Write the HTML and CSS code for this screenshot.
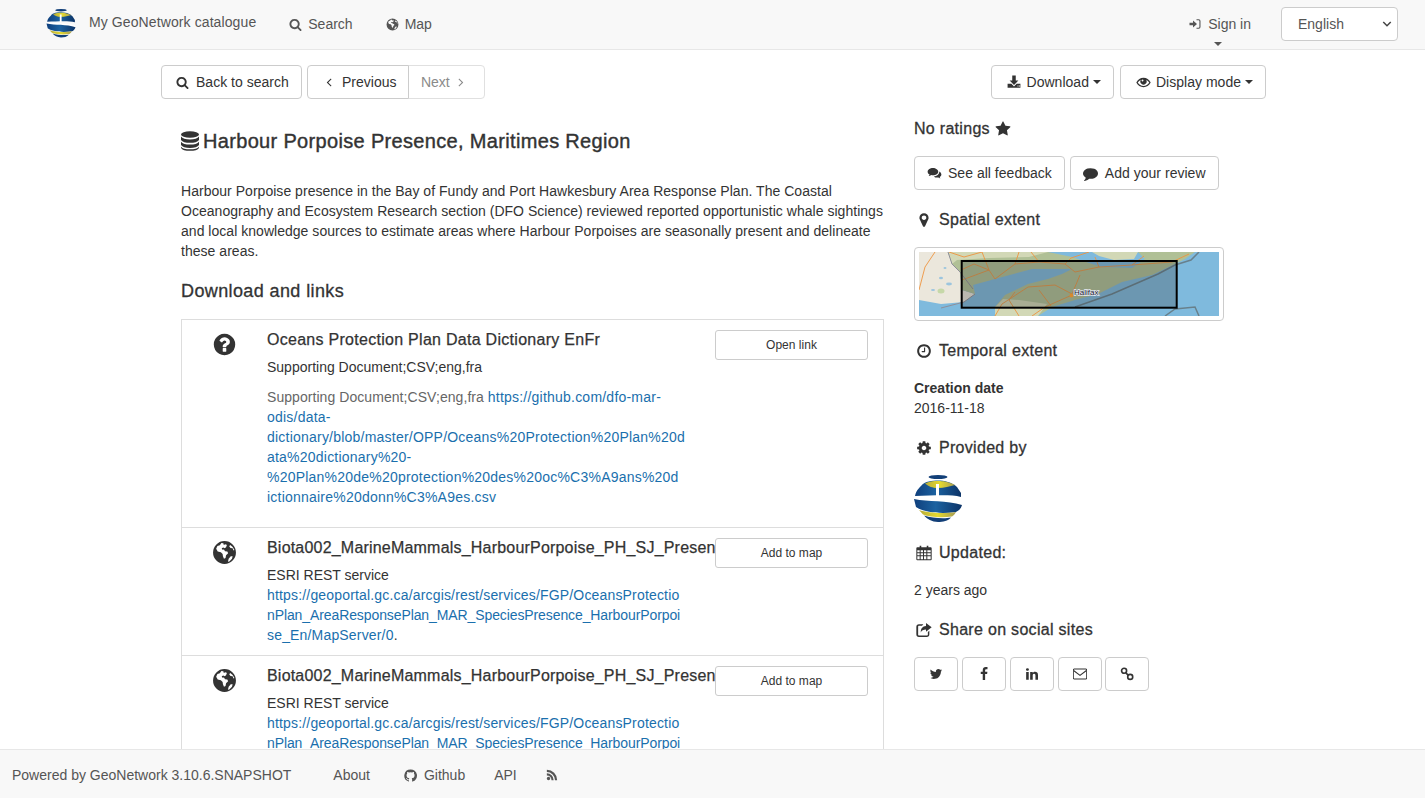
FILE: index.html
```html
<!DOCTYPE html>
<html lang="en">
<head>
<meta charset="utf-8">
<title>Harbour Porpoise Presence, Maritimes Region</title>
<link rel="stylesheet" href="styles.css">
</head>
<body>
<svg class="sprite" aria-hidden="true">
  <defs>
    <linearGradient id="gbl" x1="0" x2="1" y1="0" y2="0"><stop offset="0" stop-color="#0f3f7c"/><stop offset=".45" stop-color="#1c62a0"/><stop offset="1" stop-color="#0c3468"/></linearGradient>
    <linearGradient id="gye" x1="0" x2="1" y1="0" y2="0"><stop offset="0" stop-color="#b6ab3a"/><stop offset=".5" stop-color="#e4d92f"/><stop offset="1" stop-color="#a69c52"/></linearGradient>
  </defs>
  <symbol id="logo" viewBox="0 0 48 48">
    <ellipse cx="24" cy="2" rx="9.500" ry="2" fill="#123f78"/>
    <path d="M7 11C11 6 18 5.500 24 5.500S38 7 43 12L47 18 47 22C35 19 17 21 1 21 2 16 4 14 7 11Z" fill="url(#gbl)"/>
    <path d="M11 8.500C15 6.500 19 6 24 6S34 6.500 41 10C36 11.500 30 13 24 13S15 11.500 11 8.500Z" fill="url(#gye)"/>
    <path d="M22 9h3v13h-3z" fill="#fff"/>
    <path d="M0 22C15 24 33 23 47 27L47 29C33 26 14 27 0 24Z" fill="#fff"/>
    <path d="M0 24C14 27 33 25 48 30 47 34 44 36 42 37 28 39 11 38 2 32Z" fill="url(#gbl)"/>
    <path d="M5 35C14 38 30 39 42 37 41 39 40 40 38 41.500 28 43 15 42 9 39.500Z" fill="url(#gye)"/>
    <path d="M10 40.500C18 43 30 44 37 42.500 34 46 29 47 24 47 18 47 13 44 10 40.500Z" fill="#123f78"/>
  </symbol>
  <symbol id="i-search" viewBox="0 0 1792 1792"><path d="M1216 832q0-185-131.500-316.500t-316.500-131.500-316.500 131.500-131.500 316.500 131.500 316.500 316.500 131.500 316.500-131.500 131.500-316.500zm512 832q0 52-38 90t-90 38q-54 0-90-38l-343-342q-179 124-399 124-143 0-273.500-55.500t-225-150-150-225-55.500-273.500 55.500-273.500 150-225 225-150 273.500-55.500 273.500 55.500 225 150 150 225 55.500 273.500q0 220-124 399l343 343q37 37 37 90z"/></symbol>
  <symbol id="i-globe" viewBox="0 0 24 24"><path fill-rule="evenodd" d="M12 1a11 11 0 1 0 0 22 11 11 0 0 0 0-22ZM9 2.800 7.500 5 5.200 5.700 4 8.300 5.500 11l3 .7 1.700 1.800.3 2.200 1 2.300 1.500-.8.500-2.500 2-2-.8-1.700-2.200-.3-1-1.500-1.500.2-.7-1.400 1.500-.7 1.400.5 1.300-.9.800-2-1.500-1L13 4.200l-1.800.3-.3-1.500ZM17.500 4.800l-1 1.300 1.300 1.500 2 .3.800 2.100.9-.5A9.600 9.600 0 0 0 17.500 4.800ZM18 15.500l-2 2.500-.7 2.900 1.300-.3 2.600-2.600.6-2.500Z"/></symbol>
  <symbol id="i-question" viewBox="0 0 1792 1792"><path d="M1024 1376v-192q0-14-9-23t-23-9h-192q-14 0-23 9t-9 23v192q0 14 9 23t23 9h192q14 0 23-9t9-23zm256-672q0-88-55.500-163t-138.500-116-170-41q-243 0-371 213-15 24 8 42l132 100q7 6 19 6 16 0 25-12 53-68 86-92 34-24 86-24 48 0 85.500 26t37.500 59q0 38-20 61t-68 45q-63 28-115.500 86.500t-52.500 125.500v36q0 14 9 23t23 9h192q14 0 23-9t9-23q0-19 21.500-49.500t54.500-49.500q32-18 49-28.500t46-35 44.500-48 28-60.500 12.500-81zm384 192q0 209-103 385.500t-279.500 279.500-385.500 103-385.500-103-279.500-279.500-103-385.500 103-385.500 279.500-279.500 385.500-103 385.500 103 279.500 279.500 103 385.500z"/></symbol>
  <symbol id="i-star" viewBox="0 0 1792 1792"><path d="M1728 647q0 22-26 48l-363 354 86 500q1 7 1 20 0 21-10.500 35.500t-30.500 14.500q-19 0-40-12l-449-236-449 236q-22 12-40 12-21 0-31.500-14.500t-10.500-35.500q0-6 2-20l86-500-364-354q-25-27-25-48 0-37 56-46l502-73 225-455q19-41 49-41t49 41l225 455 502 73q56 9 56 46z"/></symbol>
  <symbol id="i-marker" viewBox="0 0 1792 1792"><path d="M1152 640q0-106-75-181t-181-75-181 75-75 181 75 181 181 75 181-75 75-181zm256 0q0 109-33 179l-364 774q-16 33-47.500 52t-67.500 19-67.500-19-46.500-52l-365-774q-33-70-33-179 0-212 150-362t362-150 362 150 150 362z"/></symbol>
  <symbol id="i-left" viewBox="0 0 1792 1792"><path d="M1203 544q0 13-10 23l-393 393 393 393q10 10 10 23t-10 23l-50 50q-10 10-23 10t-23-10l-466-466q-10-10-10-23t10-23l466-466q10-10 23-10t23 10l50 50q10 10 10 23z"/></symbol>
  <symbol id="i-right" viewBox="0 0 1792 1792"><path d="M1171 960q0 13-10 23l-466 466q-10 10-23 10t-23-10l-50-50q-10-10-10-23t10-23l393-393-393-393q-10-10-10-23t10-23l50-50q10-10 23-10t23 10l466 466q10 10 10 23z"/></symbol>
  <symbol id="i-clock" viewBox="0 0 1792 1792"><path d="M1024 544v448q0 14-9 23t-23 9h-320q-14 0-23-9t-9-23v-64q0-14 9-23t23-9h224v-352q0-14 9-23t23-9h64q14 0 23 9t9 23zm416 352q0-148-73-273t-198-198-273-73-273 73-198 198-73 273 73 273 198 198 273 73 273-73 198-198 73-273zm224 0q0 209-103 385.500t-279.500 279.500-385.500 103-385.500-103-279.500-279.500-103-385.500 103-385.500 279.500-279.500 385.500-103 385.500 103 279.500 279.500 103 385.500z"/></symbol>
  <symbol id="i-cog" viewBox="0 0 1792 1792"><path d="M1152 896q0-106-75-181t-181-75-181 75-75 181 75 181 181 75 181-75 75-181zm512-109v222q0 12-8 23t-20 13l-185 28q-19 54-39 91 35 50 107 138 10 12 10 25t-9 23q-27 37-99 108t-94 71q-12 0-26-9l-138-108q-44 23-91 38-16 136-29 186-7 28-36 28h-222q-14 0-24.500-8.500t-11.500-21.500l-28-184q-49-16-90-37l-141 107q-10 9-25 9-14 0-25-11-126-114-165-168-7-10-7-23 0-12 8-23 15-21 51-66.500t54-70.500q-27-50-41-99l-183-27q-13-2-21-12.500t-8-23.500v-222q0-12 8-23t19-13l186-28q14-46 39-92-40-57-107-138-10-12-10-24 0-10 9-23 26-36 98.500-107.500t94.500-71.500q13 0 26 10l138 107q44-23 91-38 16-136 29-186 7-28 36-28h222q14 0 24.500 8.500t11.500 21.500l28 184q49 16 90 37l142-107q9-9 24-9 13 0 25 10 129 119 165 170 7 8 7 22 0 12-8 23-15 21-51 66.500t-54 70.500q26 50 41 98l183 28q13 2 21 12.500t8 23.500z"/></symbol>
  <symbol id="i-twitter" viewBox="0 0 1792 1792"><path d="M1684 408q-67 98-162 167 1 14 1 42 0 130-38 259.500t-115.500 248.500-184.500 210.500-258 146-323 54.500q-271 0-496-145 35 4 78 4 225 0 401-138-105-2-188-64.500t-114-159.500q33 5 61 5 43 0 85-11-112-23-185.500-111.500t-73.500-205.500v-4q68 38 146 41-66-44-105-115t-39-154q0-88 44-163 121 149 294.500 238.500t371.500 99.500q-8-38-8-74 0-134 94.500-228.500t228.500-94.500q140 0 236 102 109-21 205-78-37 115-142 178 92-10 184-50z"/></symbol>
  <symbol id="i-facebook" viewBox="0 0 1792 1792"><path d="M1343 12v264h-157q-86 0-116 36t-30 108v189h293l-39 296h-254v759h-306v-759h-255v-296h255v-218q0-186 104-288.500t277-102.500q147 0 228 12z"/></symbol>
  <symbol id="i-linkedin" viewBox="0 0 1792 1792"><path d="M477 625v991h-330v-991h330zm21-306q1 73-50.500 122t-135.500 49h-2q-82 0-132-49t-50-122q0-74 51.500-122.500t134.500-48.500 133 48.500 51 122.500zm1166 729v568h-329v-530q0-105-40.500-164.500t-126.500-59.500q-63 0-105.500 34.500t-63.500 85.500q-11 30-11 81v553h-329q2-399 2-647t-1-296l-1-48h329v144h-2q20-32 41-56t56.500-52 87-43.500 114.500-15.500q171 0 275 113.500t104 332.500z"/></symbol>
  <symbol id="i-comment" viewBox="0 0 1792 1792"><path d="M1792 896q0 174-120 321.500t-326 233-450 85.500q-70 0-145-8-198 175-460 242-49 14-114 22-17 2-30.500-9t-17.500-29v-1q-3-4-.5-12t2-10 4.500-9.500l6-9 7-8.500 8-9q7-8 31-34.500t34.500-38 31-39.500 32.500-51 27-59 26-76q-157-89-247.500-220t-90.500-281q0-130 71-248.500t191-204.500 286-136.500 348-50.500q244 0 450 85.500t326 233 120 321.500z"/></symbol>
  <symbol id="i-comments" viewBox="0 0 24 24"><path d="M9.500 3C4.800 3 1 5.700 1 9c0 1.900 1.200 3.500 3.100 4.600-.3 1-.8 1.800-1.500 2.500 1.600-.2 3-.8 4.100-1.800.9.200 1.800.3 2.800.3 4.700 0 8.500-2.400 8.500-5.600S14.200 3 9.500 3Z"/><path d="M19.500 8.800c.1.300.1.600.1.900 0 3.700-3.800 6.600-8.600 6.900 1.200 1.200 3.100 1.900 5.200 1.900.7 0 1.400-.1 2-.2.900.8 2 1.300 3.300 1.500-.6-.7-1-1.400-1.200-2.200 1.700-.9 2.700-2.300 2.700-3.900 0-1.900-1.400-3.600-3.500-4.800Z"/></symbol>
  <symbol id="i-signin" viewBox="0 0 24 24"><path d="M1 9.500h7V5l8 7-8 7v-4.500H1z"/><path d="M15 2.500h4.500A3.500 3.500 0 0 1 23 6v12a3.500 3.500 0 0 1-3.500 3.500H15v-2.200h4.300c.9 0 1.500-.6 1.500-1.500V6.200c0-.9-.6-1.500-1.500-1.500H15z"/></symbol>
  <symbol id="i-download" viewBox="0 0 24 24"><path d="M9 1h6v8.500h4.500L12 17 4.500 9.500H9z"/><path d="M1 15h6.500L12 19.500 16.500 15H23v7H1zM18 18v1.600h1.700V18zm2.700 0v1.600h1.700V18z"/></symbol>
  <symbol id="i-eye" viewBox="0 0 24 24"><path fill-rule="evenodd" d="M12 4.500C7 4.500 3 7.500.5 12c2.500 4.500 6.500 7.500 11.500 7.500s9-3 11.500-7.500C21 7.500 17 4.500 12 4.500ZM2.800 12c1.300-2 3-3.600 5-4.500a5 5 0 1 0 8.400 0c2 1 3.700 2.500 5 4.500-2.200 3.400-5.400 5.500-9.200 5.500S5 15.400 2.800 12ZM9.200 7.800a1.500 1.500 0 1 1 2.100 2.100A1.500 1.500 0 0 1 9.200 7.800Z"/></symbol>
  <symbol id="i-database" viewBox="1.500 .500 21 23.200" preserveAspectRatio="none"><ellipse cx="12" cy="4.500" rx="10.500" ry="3.800"/><path d="M1.500 7c1.500 2.300 5.500 3.300 10.500 3.300S21 9.300 22.500 7v3.800c-1.500 2.200-5.500 3.400-10.500 3.400S3 13 1.500 10.800ZM1.500 13c1.500 2.300 5.500 3.300 10.500 3.300s9-1 10.500-3.300v3.800c-1.500 2.200-5.500 3.400-10.500 3.400S3 19 1.500 16.800Z"/><path d="M1.500 18.800c1.500 2 5.500 3 10.500 3s9-1 10.500-3v1c-1 2.500-5.500 3.700-10.500 3.700S2.500 22.300 1.500 19.800Z"/></symbol>
  <symbol id="i-calendar" viewBox="0 0 24 24"><path fill-rule="evenodd" d="M5.500 1h2.400v2.500h8.200V1h2.400v2.500H22a1.500 1.500 0 0 1 1.500 1.500v16.500A1.500 1.500 0 0 1 22 23H2a1.500 1.500 0 0 1-1.500-1.500V5A1.500 1.500 0 0 1 2 3.500h3.500Zm-3.500 7v3h3.500V8Zm5 0v3h3.500V8Zm5 0v3h3.500V8Zm5 0v3H22V8ZM2 12.500v3h3.500v-3Zm5 0v3h3.500v-3Zm5 0v3h3.500v-3Zm5 0v3H22v-3ZM2 17v4.500h3.500V17Zm5 0v4.500h3.500V17Zm5 0v4.500h3.500V17Zm5 0v4.500H22V17Z"/></symbol>
  <symbol id="i-share" viewBox="0 0 24 24"><path d="M15 1.500 23.500 8 15 14.800v-3.600c-4 0-6.500 1-7.800 4.600-.4-5.800 2.500-9.300 7.800-9.800Z"/><path d="M4.500 3.500H11l-2 2.200H4.800c-1 0-1.600.6-1.600 1.600v11.400c0 1 .6 1.600 1.600 1.600h11.400c1 0 1.600-.6 1.600-1.600V15l2.200-1.800v5.300a4 4 0 0 1-4 4H4.500a4 4 0 0 1-4-4v-11a4 4 0 0 1 4-4Z"/></symbol>
  <symbol id="i-envelope" viewBox="0 0 24 24"><rect x=".5" y="3.500" width="23" height="17" rx="1.500" fill="none" stroke="currentColor" stroke-width="1.800"/><path d="M1 6l11 8.500L23 6" fill="none" stroke="currentColor" stroke-width="1.800"/></symbol>
  <symbol id="i-link" viewBox="0 0 24 24"><g fill="none" stroke="currentColor" stroke-width="2.800"><circle cx="7" cy="6.500" r="4.300"/><circle cx="17.500" cy="17" r="4.300"/><path d="M10 10l4 4"/></g></symbol>
  <symbol id="i-github" viewBox="0 0 24 24"><path d="M12 .8A11.500 11.500 0 0 0 8.400 23.200c.6.100.8-.2.800-.6v-2c-3.200.7-3.900-1.500-3.900-1.500-.5-1.300-1.300-1.700-1.300-1.700-1-.7.100-.7.100-.7 1.200.1 1.800 1.200 1.800 1.200 1 1.800 2.700 1.300 3.300 1 .1-.8.400-1.300.8-1.600-2.600-.3-5.300-1.300-5.300-5.700 0-1.300.5-2.300 1.200-3.100-.1-.3-.5-1.500.1-3.100 0 0 1-.3 3.200 1.200a11 11 0 0 1 5.800 0c2.200-1.500 3.200-1.200 3.200-1.200.6 1.600.2 2.800.1 3.100.7.800 1.200 1.800 1.200 3.100 0 4.400-2.700 5.400-5.300 5.700.4.400.8 1.100.8 2.200v3.200c0 .3.200.7.800.6A11.500 11.500 0 0 0 12 .8Z"/></symbol>
  <symbol id="i-rss" viewBox="0 0 24 24"><circle cx="5" cy="19" r="3.300"/><path d="M1.700 8.700v4.200A9.400 9.400 0 0 1 11 22.300h4.300A13.600 13.600 0 0 0 1.700 8.700Z"/><path d="M1.700 1.700V6A16.300 16.300 0 0 1 18 22.300h4.300A20.600 20.600 0 0 0 1.700 1.700Z"/></symbol>
</svg>

<div class="app">
  <header class="navbar">
    <a class="brand"><svg class="brand-logo"><use href="#logo"/></svg><span class="brand-text">My GeoNetwork catalogue</span></a>
    <a class="nav-link nav-search"><svg class="ic"><use href="#i-search"/></svg>Search</a>
    <a class="nav-link nav-map"><svg class="ic"><use href="#i-globe"/></svg>Map</a>
    <div class="nav-right">
      <a class="signin"><span class="signin-row"><svg class="ic"><use href="#i-signin"/></svg>Sign in</span><span class="caret signin-caret"></span></a>
      <div class="lang-wrap">
        <select class="lang"><option>English</option></select>
        <svg class="lang-chev" viewBox="0 0 12 8"><path d="M1.500 1.500 6 6l4.500-4.500" fill="none" stroke="currentColor" stroke-width="1.800"/></svg>
      </div>
    </div>
  </header>

  <main class="page">
    <div class="container">
      <div class="toolbar">
        <a class="btn"><svg class="ic"><use href="#i-search"/></svg>Back to search</a>
        <div class="btn-group">
          <a class="btn btn-prev"><svg class="ic ic-angle"><use href="#i-left"/></svg>Previous</a>
          <a class="btn btn-next">Next<svg class="ic ic-angle"><use href="#i-right"/></svg></a>
        </div>
        <div class="toolbar-right">
          <a class="btn"><svg class="ic ic-down"><use href="#i-download"/></svg>Download<span class="caret"></span></a>
          <a class="btn"><svg class="ic ic-eye"><use href="#i-eye"/></svg>Display mode<span class="caret"></span></a>
        </div>
      </div>

      <div class="columns">
        <section class="content">
          <h1 class="title"><svg class="title-ic"><use href="#i-database"/></svg>Harbour Porpoise Presence, Maritimes Region</h1>
          <p class="abstract">Harbour Porpoise presence in the Bay of Fundy and Port Hawkesbury Area Response Plan. The Coastal Oceanography and Ecosystem Research section (DFO Science) reviewed reported opportunistic whale sightings and local knowledge sources to estimate areas where Harbour Porpoises are seasonally present and delineate these areas.</p>
          <h2 class="links-title">Download and links</h2>
          <div class="links">
            <article class="link-row link-row-first">
              <div class="link-ic"><svg><use href="#i-question"/></svg></div>
              <div class="link-body">
                <h3 class="link-title link-title-doc">Oceans Protection Plan Data Dictionary EnFr</h3>
                <p class="link-sub">Supporting Document;CSV;eng,fra</p>
                <p class="link-desc"><span class="muted">Supporting Document;CSV;eng,fra</span> <a class="url url-doc">https://github.com/dfo-mar-<br>odis/data-<br>dictionary/blob/master/OPP/Oceans%20Protection%20Plan%20d<br>ata%20dictionary%20-<br>%20Plan%20de%20protection%20des%20oc%C3%A9ans%20d<br>ictionnaire%20donn%C3%A9es.csv</a></p>
              </div>
              <a class="btn btn-sm">Open link</a>
            </article>
            <article class="link-row">
              <div class="link-ic"><svg><use href="#i-globe"/></svg></div>
              <div class="link-body">
                <h3 class="link-title">Biota002_MarineMammals_HarbourPorpoise_PH_SJ_Presence_En</h3>
                <p class="link-sub">ESRI REST service</p>
                <p class="link-text"><a class="url">https://geoportal.gc.ca/arcgis/rest/services/FGP/OceansProtectio<br><span class="tight">nPlan_AreaResponsePlan_MAR_SpeciesPresence_HarbourPorpoi</span><br>se_En/MapServer/0</a>.</p>
              </div>
              <a class="btn btn-sm">Add to map</a>
            </article>
            <article class="link-row">
              <div class="link-ic"><svg><use href="#i-globe"/></svg></div>
              <div class="link-body">
                <h3 class="link-title">Biota002_MarineMammals_HarbourPorpoise_PH_SJ_Presence_Fr</h3>
                <p class="link-sub">ESRI REST service</p>
                <p class="link-text"><a class="url">https://geoportal.gc.ca/arcgis/rest/services/FGP/OceansProtectio<br><span class="tight">nPlan_AreaResponsePlan_MAR_SpeciesPresence_HarbourPorpoi</span><br>se_Fr/MapServer/0</a>.</p>
              </div>
              <a class="btn btn-sm">Add to map</a>
            </article>
          </div>
        </section>

        <aside class="side">
          <h4 class="side-h side-ratings">No ratings <svg class="side-star"><use href="#i-star"/></svg></h4>
          <div class="side-btns">
            <a class="btn"><svg class="ic ic-fb"><use href="#i-comments"/></svg>See all feedback</a>
            <a class="btn"><svg class="ic ic-rv"><use href="#i-comment"/></svg>Add your review</a>
          </div>
          <h4 class="side-h side-block"><span class="side-ic"><svg><use href="#i-marker"/></svg></span>Spatial extent</h4>
          <div class="thumb">
            <svg class="map" viewBox="0 0 300 64">
              <rect width="300" height="64" fill="#7fbadd"/>
              <path class="land-w" d="M0 0H29L33 12 41 20 43 38 56 42 45 50 22 52 0 48Z"/>
              <path class="land" d="M29 0H129L153 5 173 12 183 15 213 16 219 12 226 7 219 0H276L266 7 256 12 233 23 203 30 179 42 156 48 133 55 119 64H76V55L86 43 109 32 129 27 143 22 153 17H129L113 17 76 27 54 33 56 42 43 38 41 20 33 12Z"/>
              <path class="land-e" d="M173 0H219L215 7 195 8 180 4Z"/>
              <path class="land-e" d="M76 55 84 47 100 48 128 52 119 64H76Z"/>
              <path class="land-e" d="M29 0H129L110 5 70 6 38 8 33 12Z"/>
              <ellipse class="lake" cx="22" cy="26" rx="2" ry="1.200"/>
              <ellipse class="lake" cx="30" cy="32" rx="3" ry="1.400"/>
              <ellipse class="lake" cx="14" cy="38" rx="2" ry="1"/>
              <ellipse class="lake" cx="26" cy="16" rx="1.500" ry="1"/>
              <ellipse class="green-spot" cx="22" cy="39" rx="3.500" ry="2.500"/>
              <path class="road" d="M0 38 6 15 16 0M43 28 70 18 76 27 96 12 120 10 146 12 156 20 180 15 213 13 253 10M63 0 70 18M100 0 96 12M146 12 152 6 170 0M161 23 153 42 136 33 109 35 83 52 76 64M153 43 126 55 113 64M96 40 90 48 100 64M120 38 132 54M30 0 45 5 63 0M70 18 55 12 42 18M120 10 112 0M213 13 225 4M180 15 176 5M253 10 270 2"/>
              <path class="border" d="M29 0 33 12 41 20 54 37M22 56 45 50 56 42"/>
              <path class="coast" d="M156 55 193 42 239 22 256 13M256 13 272 8 280 0M246 64 256 57 276 55 280 64"/>
              <rect class="bbox" x="42.700" y="9" width="215" height="46.700"/>
              <circle cx="152.500" cy="43.500" r="2" fill="#d68a2e"/>
              <text class="map-label" x="155" y="43">Halifax</text>
            </svg>
          </div>
          <h4 class="side-h side-block"><span class="side-ic"><svg><use href="#i-clock"/></svg></span>Temporal extent</h4>
          <dl class="dates">
            <dt>Creation date</dt>
            <dd>2016-11-18</dd>
          </dl>
          <h4 class="side-h side-block"><span class="side-ic"><svg><use href="#i-cog"/></svg></span>Provided by</h4>
          <svg class="org-logo"><use href="#logo"/></svg>
          <h4 class="side-h side-block"><span class="side-ic"><svg><use href="#i-calendar"/></svg></span>Updated:</h4>
          <p class="ago">2 years ago</p>
          <h4 class="side-h side-block"><span class="side-ic"><svg><use href="#i-share"/></svg></span>Share on social sites</h4>
          <div class="social">
            <a class="btn btn-soc"><svg><use href="#i-twitter"/></svg></a>
            <a class="btn btn-soc"><svg><use href="#i-facebook"/></svg></a>
            <a class="btn btn-soc"><svg><use href="#i-linkedin"/></svg></a>
            <a class="btn btn-soc"><svg><use href="#i-envelope"/></svg></a>
            <a class="btn btn-soc btn-soc-last"><svg><use href="#i-link"/></svg></a>
          </div>
        </aside>
      </div>
    </div>
  </main>

  <footer class="footer">
    <span class="powered">Powered by GeoNetwork 3.10.6.SNAPSHOT</span>
    <a class="foot-about">About</a>
    <a class="foot-github"><svg class="ic"><use href="#i-github"/></svg>Github</a>
    <a class="foot-api">API</a>
    <a class="foot-rss"><svg class="ic-rss"><use href="#i-rss"/></svg></a>
  </footer>
</div>
</body>
</html>
```

FILE: styles.css
```css
* { box-sizing: border-box; }
html, body { margin: 0; height: 100%; overflow: hidden; }
body {
  font-family: "Liberation Sans", Arial, sans-serif;
  font-size: 14px;
  line-height: 20px;
  color: #333;
  background: #fff;
}
svg { fill: currentColor; }
.sprite { display: block; width: 0; height: 0; overflow: hidden; }
.app { display: flex; flex-direction: column; height: 798px; }

/* navbar */
.navbar {
  flex: none;
  display: flex;
  align-items: center;
  height: 50px;
  padding: 0 0 1px 46px;
  background: #f8f8f8;
  border-bottom: 1px solid #e7e7e7;
  color: #555;
}
.brand { display: flex; align-items: center; margin-right: 33px; }
.brand-logo { width: 30px; height: 29px; margin-top: -2px; margin-right: 13px; }
.brand-text { margin-top: -4px; letter-spacing: .1px; }
.nav-link { display: flex; align-items: center; }
.nav-search { margin-right: 33px; }
.ic { width: 13px; height: 13px; margin-right: 7px; flex: none; }
.nav-link .ic { margin-right: 6px; }
.nav-right { margin-left: auto; display: flex; align-items: center; padding-right: 27px; }
.signin { position: relative; display: block; margin-right: 30px; }
.signin-row { display: flex; align-items: center; }
.signin-row .ic { width: 12px; height: 12px; margin-right: 7px; }
.caret {
  display: inline-block;
  width: 0;
  height: 0;
  margin-left: 4px;
  vertical-align: middle;
  border-top: 4px solid currentColor;
  border-left: 4px solid transparent;
  border-right: 4px solid transparent;
}
.signin-caret { position: absolute; left: 25px; top: 28px; margin: 0; }
.lang-wrap { position: relative; width: 117px; height: 34px; }
.lang {
  display: block;
  width: 100%;
  height: 100%;
  padding: 0 16px;
  appearance: none;
  font: inherit;
  color: #555;
  background: #fff;
  border: 1px solid #ccc;
  border-radius: 4px;
}
.lang-chev { position: absolute; right: 6px; top: 13px; width: 10px; height: 8px; color: #444; pointer-events: none; }

/* page */
.page { flex: 1 1 0; min-height: 0; overflow: hidden; }
.container { width: 1105px; margin-left: 161px; padding-top: 15px; }
.toolbar { display: flex; align-items: center; gap: 5px; }
.toolbar-right { margin-left: auto; display: flex; gap: 6px; }
.btn {
  display: inline-flex;
  align-items: center;
  justify-content: center;
  height: 34px;
  padding: 0 12px 0 14px;
  background: #fff;
  border: 1px solid #ccc;
  border-radius: 4px;
  color: #333;
  letter-spacing: .02px;
  white-space: nowrap;
}
.toolbar-right .btn { padding-left: 15px; }
.btn-group { display: flex; }
.btn-prev {
  position: relative;
  z-index: 1;
  justify-content: flex-start;
  width: 102px;
  padding: 0 0 0 14px;
  border-radius: 4px 0 0 4px;
}
.btn-next {
  justify-content: flex-start;
  width: 77px;
  margin-left: -1px;
  padding: 0 0 0 12px;
  border-color: #e0e0e0;
  border-radius: 0 4px 4px 0;
  color: #8a8a8a;
}
.ic-angle { width: 14px; height: 14px; }
.btn-prev .ic-angle { margin: 0 6px 0 0; }
.btn-next .ic-angle { margin: 0 0 0 4px; }
.ic-down { width: 14px; height: 14px; margin-right: 6px; }
.ic-eye { width: 15px; height: 15px; margin-right: 5px; }

.columns { display: flex; align-items: flex-start; }
.content { width: 703px; margin-left: 20px; flex: none; }
.title {
  margin: 30px 0 0;
  display: flex;
  align-items: center;
  height: 24px;
  font-size: 20px;
  font-weight: 400;
  line-height: 24px;
  letter-spacing: .33px;
  -webkit-text-stroke: .4px #333;
  white-space: nowrap;
}
.title-ic { width: 18px; height: 20px; margin-right: 4px; flex: none; }
.abstract { margin: 28px 0 0; letter-spacing: .03px; }
.links-title {
  margin: 18px 0 0;
  font-size: 18px;
  line-height: 24px;
  font-weight: 400;
  letter-spacing: .39px;
  -webkit-text-stroke: .3px #333;
}
.links { margin-top: 16px; border: 1px solid #ddd; border-bottom: 0; }
.link-row {
  display: grid;
  grid-template-columns: 85px 448px 153px;
  align-items: start;
  padding: 10px 0 10px;
  border-top: 1px solid #ddd;
}
.link-row-first { border-top: 0; padding-bottom: 20px; }
.link-ic { display: flex; justify-content: center; padding: 2px 1px 0 0; }
.link-ic svg { width: 25px; height: 25px; }
.link-title {
  margin: 0;
  font-size: 16px;
  line-height: 20px;
  font-weight: 400;
  letter-spacing: .2px;
  -webkit-text-stroke: .25px #333;
  white-space: nowrap;
  overflow: hidden;
}
.link-title-doc { letter-spacing: .28px; }
.link-sub { margin: 7px 0 0; }
.link-desc { margin: 10px 0 0; white-space: nowrap; }
.link-text { margin: 0; white-space: nowrap; }
.muted { color: #666; letter-spacing: .06px; }
.url { color: #1a6fad; letter-spacing: .17px; }
.url-doc { letter-spacing: .22px; }
.tight { letter-spacing: -.1px; }
.btn-sm { height: 30px; padding: 0; font-size: 12px; border-radius: 3px; }

/* side */
.side { margin-left: 30px; width: 352px; flex: none; }
.side-h {
  margin: 0;
  display: flex;
  align-items: center;
  font-size: 16px;
  line-height: 20px;
  font-weight: 400;
  letter-spacing: .3px;
  -webkit-text-stroke: .3px #333;
}
.side-ratings { margin-top: 20px; }
.side-star { width: 16px; height: 16px; margin-left: 5px; }
.side-btns { display: flex; gap: 5px; margin-top: 17px; }
.side-btns .btn { padding: 0 12px; }
.side-btns .ic { width: 15px; height: 15px; }
.side-btns .ic-fb { margin-right: 6px; }
.side-btns .ic-rv { margin-right: 7px; }
.side-block { margin-top: 20px; }
.side-ic { width: 25px; display: flex; padding-left: 2px; flex: none; }
.side-ic svg { width: 16px; height: 16px; }
.thumb {
  margin-top: 17px;
  width: 310px;
  height: 74px;
  padding: 4px;
  border: 1px solid #ccc;
  border-radius: 4px;
}
.map { display: block; width: 300px; height: 64px; }
.land { fill: #b0c096; }
.land-w { fill: #ebe7dc; }
.land-e { fill: #d2d8b6; }
.lake { fill: #9cc5de; }
.green-spot { fill: #c6d8a8; }
.road { fill: none; stroke: #ee9440; stroke-width: .9; }
.border { fill: none; stroke: #8f8f9a; stroke-width: 1; }
.coast { fill: none; stroke: #68808c; stroke-width: 1.500; }
.bbox { fill: rgba(60, 60, 60, .27); stroke: #000; stroke-width: 2; }
.map-label {
  font-size: 8px;
  fill: #223;
  stroke: #e6eaf4;
  stroke-width: 1.500;
  paint-order: stroke;
}
.dates { margin: 17px 0 0; }
.dates dt { font-weight: 700; }
.dates dd { margin: 0; }
.org-logo { display: block; width: 48px; height: 48px; margin-top: 17px; }
.ago { margin: 17px 0 0; }
.social { display: flex; gap: 4px; margin-top: 17px; }
.btn-soc { width: 44px; padding: 0; }
.btn-soc svg { width: 14px; height: 14px; }
.btn-soc-last { margin-left: -1px; }

/* footer */
.footer {
  flex: none;
  display: flex;
  align-items: center;
  height: 49px;
  padding: 2px 0 0 12px;
  background: #f8f8f8;
  border-top: 1px solid #e7e7e7;
  color: #555;
}
.powered { margin-right: 42px; }
.foot-about { margin-right: 34px; }
.foot-github { display: flex; align-items: center; margin-right: 29px; }
.foot-api { margin-right: 29px; }
.foot-rss { display: flex; }
.ic-rss { width: 12px; height: 12px; }
```
